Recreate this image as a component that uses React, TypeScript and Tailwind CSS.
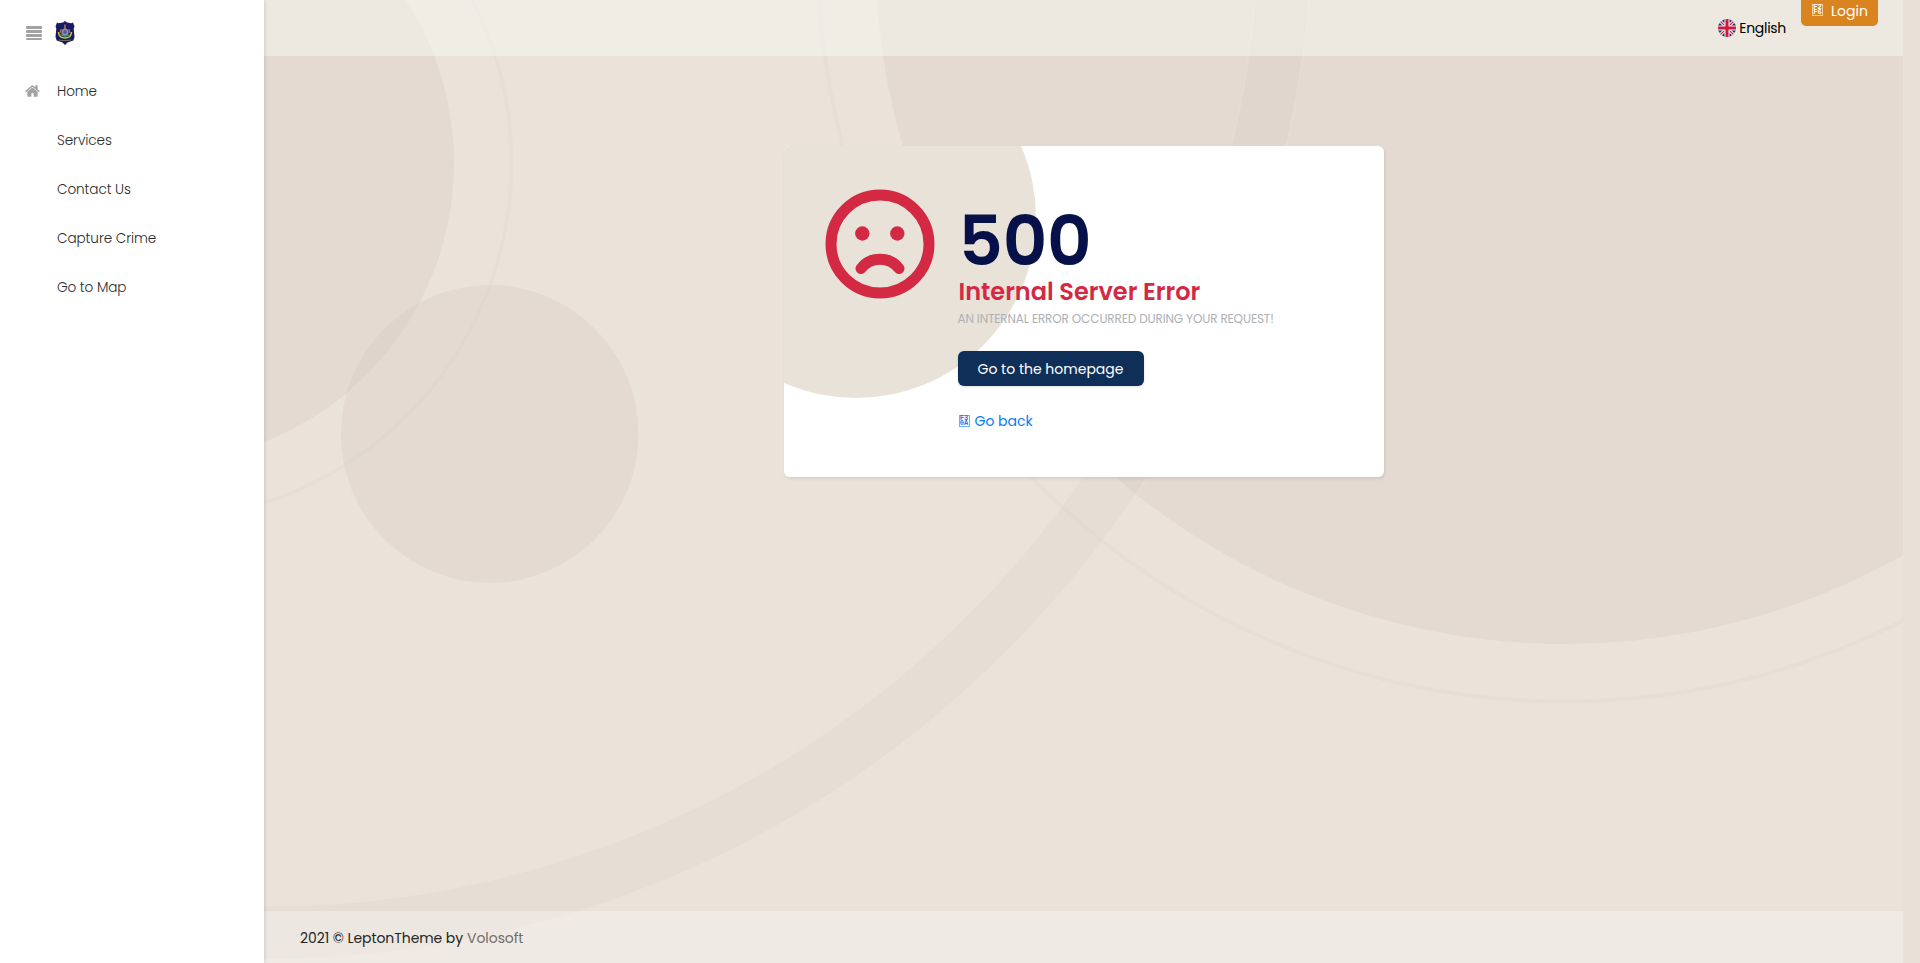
import type { ReactNode } from "react";

const menu = [
  { label: "Home", home: true },
  { label: "Services" },
  { label: "Contact Us" },
  { label: "Capture Crime" },
  { label: "Go to Map" },
];

function Backdrop() {
  return (
    <svg className="absolute inset-0 h-full w-full" viewBox="264 0 1639 963" preserveAspectRatio="none">
      <rect x="264" width="1639" height="963" fill="#ebe2d9" />
      <g fill="none" stroke="#cbc5b9">
        <circle cx="264" cy="-89" r="1022" strokeWidth="52" strokeOpacity="0.15" />
        <circle cx="154" cy="163" r="357.5" strokeWidth="3.5" strokeOpacity="0.09" />
        <circle cx="1565" cy="-45.5" r="747" strokeWidth="4" strokeOpacity="0.09" />
      </g>
      <g fill="#c8c0b4" fillOpacity="0.2">
        <circle cx="154" cy="163" r="300" />
        <circle cx="489.7" cy="434" r="148.8" />
        <circle cx="1565" cy="-45.5" r="689.5" />
      </g>
      <g fill="none" stroke="#ebe2d9" strokeOpacity="0.25" strokeWidth="2">
        <circle cx="264" cy="-89" r="995" />
        <circle cx="264" cy="-89" r="1049" />
      </g>
    </svg>
  );
}

function Emblem() {
  return (
    <svg className="h-6 w-5" viewBox="0 0 20 24">
      <path d="M10 0l2 1.6 4.5.6L18 1.5l1.5 4-.8 2 .8 8.5-1.2 3.5-5.8 2L10 24l-2.500-2.500-5.800-2L.5 16l.8-8.500-.8-2L2 1.500l1.500.7 4.500-.6z" fill="#171b64" />
      <path d="M3.500 11c.2 4 3 6 6.500 6s6.300-2 6.500-6" fill="none" stroke="#dcbb38" strokeWidth="1.500" />
      <path d="M5.500 13.500c1.500 2 7.500 2 9 0" fill="none" stroke="#278a53" strokeWidth="2" />
      <circle cx="10" cy="11" r="3.600" fill="#8f91b5" />
      <circle cx="10" cy="11" r="2" fill="#555b99" />
      <path d="M10 3.500v5" stroke="#c16d4c" strokeWidth="1.600" />
      <path d="M6 8l-1 4M14 8l1 4" stroke="#d6733b" strokeWidth="1" />
      <path d="M4 19c4 .8 8 .8 12 0" fill="none" stroke="#6f704f" strokeWidth="1" />
    </svg>
  );
}

function HomeIcon() {
  return (
    <svg className="-mt-px h-4 w-[15px]" viewBox="0 0 1664 1792" fill="#a2a2a2">
      <path d="M1408 992v480q0 26-19 45t-45 19H960v-384H704v384H320q-26 0-45-19t-19-45V992q0-1 .5-3t.5-3l575-474 575 474q1 2 1 6zm223-69l-62 74q-8 9-21 11h-3q-13 0-21-7L832 424 140 1001q-12 8-24 7-13-2-21-11l-62-74q-8-10-7-23.500T37 878L756 279q32-26 76-26t76 26l244 204V288q0-14 9-23t23-9h192q14 0 23 9t9 23v408l219 182q10 8 11 21.500t-7 23.500z" />
    </svg>
  );
}

function Flag() {
  return (
    <svg className="h-[18px] w-[18px]" viewBox="0 0 18 18">
      <clipPath id="round"><circle cx="9" cy="9" r="9" /></clipPath>
      <g clipPath="url(#round)">
        <rect width="18" height="18" fill="#1d2f73" />
        <path d="M0 0l18 18M18 0L0 18" stroke="#f1f1f3" strokeWidth="3.200" />
        <path d="M0 0l18 18M18 0L0 18" stroke="#d3173c" strokeWidth="1.100" />
        <path d="M9 0v18M0 9h18" stroke="#f1f1f3" strokeWidth="5.200" />
        <path d="M9 0v18M0 9h18" stroke="#d3173c" strokeWidth="3" />
      </g>
    </svg>
  );
}

function CodeBox({ top, bottom }: { top: string; bottom: string }) {
  return (
    <span className="flex h-3 w-[11px] flex-col items-center justify-center border border-current/60 font-['Liberation_Mono',monospace] text-[7px] font-bold leading-[5px] tracking-normal">
      <span>{top}</span>
      <span>{bottom}</span>
    </span>
  );
}

function Sidebar() {
  return (
    <aside className="relative z-10 flex w-[264px] shrink-0 flex-col bg-white shadow-[0_0_4px_rgba(0,0,0,0.18)]">
      <div className="flex h-[66px] items-center gap-[13px] pl-[26px]">
        <div className="-mt-px flex w-4 flex-col gap-[1px]">
          <i className="h-[3px] rounded-[1px] bg-[#a2a2a2]" />
          <i className="h-[3px] rounded-[1px] bg-[#a2a2a2]" />
          <i className="h-[3px] rounded-[1px] bg-[#a2a2a2]" />
          <i className="h-[2px] rounded-[1px] bg-[#a2a2a2]" />
        </div>
        <Emblem />
      </div>
      <nav className="flex flex-col pt-px text-[13.6px] font-light tracking-[-0.08px] text-[#2a2a2a]">
        {menu.map((item) => (
          <a key={item.label} className="flex h-[49px] items-center pl-[25px]">
            <span className="w-8">{item.home && <HomeIcon />}</span>
            <span className="pt-0.5">{item.label}</span>
          </a>
        ))}
      </nav>
    </aside>
  );
}

function SadFace() {
  return (
    <svg className="h-[110px] w-[110px] shrink-0" viewBox="0 0 110 110" fill="none" stroke="#d32943" strokeWidth="11">
      <circle cx="55" cy="55" r="49" />
      <circle cx="37.300" cy="44.500" r="7.200" fill="#d32943" stroke="none" />
      <circle cx="72.300" cy="44.500" r="7.200" fill="#d32943" stroke="none" />
      <path d="M36 79.500c9.500-12.500 28.500-12.500 38 0" strokeLinecap="round" />
    </svg>
  );
}

function Card({ children }: { children: ReactNode }) {
  return (
    <section className="relative h-[331px] w-[600px] overflow-hidden rounded-md bg-white shadow-[1px_2px_3px_rgba(60,50,30,0.1)]">
      <div className="absolute -left-[108px] -top-[108px] h-[360px] w-[360px] rounded-full bg-[#e9e2d8]" />
      <div className="relative flex gap-[23px] pl-[41px] pt-[43px]">{children}</div>
    </section>
  );
}

export default function App() {
  return (
    <div className="flex h-[963px] w-full overflow-hidden bg-[#e9e1d7] font-[Poppins,Inter,sans-serif]">
      <Sidebar />
      <div className="relative mr-[17px] flex-1">
        <Backdrop />
        <div className="relative flex h-full flex-col">
          <header className="flex h-14 items-start justify-end bg-[#f6f7f2]/50 pr-[25px]">
            <div className="mr-[15px] mt-[19px] flex items-center gap-[3px] text-[14px] leading-[18px] text-black">
              <Flag />
              <span className="tracking-[-0.3px]">English</span>
            </div>
            <a className="flex h-[26px] w-[77px] gap-2 rounded-b-[5px] bg-[#d9841e] pl-[11px] pt-1 text-[14px] leading-[14px] text-white">
              <CodeBox top="F2" bottom="F6" />
              <span>Login</span>
            </a>
          </header>
          <main className="flex flex-1 justify-center pt-[90px]">
            <Card>
              <SadFace />
              <div className="flex flex-col items-start">
                <h1 className="ml-px mt-[14px] text-[69px] font-semibold leading-[76px] tracking-[-0.3px] text-[#051148]">500</h1>
                <h2 className="-mt-0.5 ml-px text-[24px] font-semibold leading-[29px] text-[#d32943]">Internal Server Error</h2>
                <p className="mt-1 text-[12px] leading-[18px] tracking-[-0.13px] text-[#adb1b5]">AN INTERNAL ERROR OCCURRED DURING YOUR REQUEST!</p>
                <a className="mt-[23px] flex h-[35px] w-[186px] items-center justify-center rounded-md bg-[#102f58] pt-px text-[14px] text-white shadow-[0_1px_3px_rgba(0,0,0,0.12)]">Go to the homepage</a>
                <a className="mt-[26px] flex items-center gap-[5px] pl-px text-[14px] leading-[18px] text-[#0a7cf5]">
                  <CodeBox top="F3" bottom="0A" />
                  <span>Go back</span>
                </a>
              </div>
            </Card>
          </main>
          <footer className="flex h-[52px] items-center gap-1 bg-[#f6f5f2]/45 pl-9 pt-[2px] text-[14px] tracking-[-0.07px] text-[#252422]">
            <span>2021 © LeptonTheme by</span>
            <span className="text-[#6f6d69]">Volosoft</span>
          </footer>
        </div>
      </div>
    </div>
  );
}
